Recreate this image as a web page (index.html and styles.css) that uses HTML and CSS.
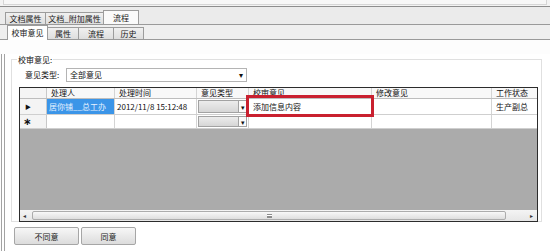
FILE: index.html
```html
<!DOCTYPE html>
<html lang="zh-CN">
<head>
    <meta charset="UTF-8">
    <title>流程 - 校审意见</title>
    <link rel="stylesheet" href="styles.css">
</head>
<body>
    <div class="top-strip"><div class="top-box"></div></div>

    <!-- outer tabs -->
    <div class="tab-row tab-row-outer">
        <div class="tab w40">文档属性</div>
        <div class="tab w58">文档_附加属性</div>
        <div class="tab tab-active w35">流程</div>
    </div>

    <!-- inner tabs -->
    <div class="tab-row tab-row-inner">
        <div class="tab tab-active w40">校审意见</div>
        <div class="tab w31">属性</div>
        <div class="tab w35">流程</div>
        <div class="tab w30">历史</div>
    </div>

    <div class="panel">
        <fieldset class="group">
            <legend>校审意见:</legend>

            <div class="filter">
                <span class="filter-label">意见类型:</span>
                <div class="combo">
                    <span>全部意见</span>
                    <span class="combo-arrow">▾</span>
                </div>
            </div>

            <div class="grid">
                <div class="grid-row grid-head">
                    <div class="cell rh"></div>
                    <div class="cell">处理人</div>
                    <div class="cell">处理时间</div>
                    <div class="cell">意见类型</div>
                    <div class="cell">校审意见</div>
                    <div class="cell">修改意见</div>
                    <div class="cell">工作状态</div>
                </div>
                <div class="grid-row row-1">
                    <div class="cell rh">▶</div>
                    <div class="cell selected">居你铺__总工办</div>
                    <div class="cell date">2012/11/8 15:12:48</div>
                    <div class="cell cell-combo"><span class="mini-box"></span><span class="mini-arrow">▾</span></div>
                    <div class="cell">添加信息内容</div>
                    <div class="cell"></div>
                    <div class="cell">生产副总</div>
                </div>
                <div class="grid-row row-2">
                    <div class="cell rh star">∗</div>
                    <div class="cell"></div>
                    <div class="cell"></div>
                    <div class="cell cell-combo"><span class="mini-box"></span><span class="mini-arrow">▾</span></div>
                    <div class="cell"></div>
                    <div class="cell"></div>
                    <div class="cell"></div>
                </div>
                <div class="grid-empty"></div>
                <div class="hscroll">
                    <span class="scroll-btn left">◂</span>
                    <span class="scroll-thumb"><span class="grip"></span></span>
                    <span class="scroll-btn right">▸</span>
                </div>

                <!-- highlight drawn over the grid -->
                <div class="highlight"></div>
            </div>
        </fieldset>

        <div class="actions">
            <button class="btn w65">不同意</button>
            <button class="btn w55">同意</button>
        </div>
    </div>
</body>
</html>
```

FILE: styles.css
```css
* {
    margin: 0;
    padding: 0;
    box-sizing: border-box;
}

html, body {
    overflow: hidden;
}

body {
    width: 550px;
    height: 251px;
    background: #fdfdfd;
    font-family: "Noto Sans CJK SC", "Liberation Sans", sans-serif;
    font-size: 8px;
    line-height: 10px;
    color: #111;
}

.top-strip {
    height: 7px;
    background: #f3f3f3;
    border-bottom: 1px solid #8d8d8d;
    padding: 0 3px;
}

.top-box {
    height: 5px;
    border: 1px solid #d6d6d6;
    border-top: none;
    background: #f7f7f7;
}

/* tabs */
.tab-row {
    display: flex;
    align-items: flex-end;
    border-bottom: 1px solid #9a9a9a;
}

.tab-row-outer {
    height: 18px;
    padding-left: 5px;
    background: #ebebeb;
}

.tab-row-inner {
    height: 15px;
    padding-left: 7px;
    background: #efefef;
}

.tab {
    height: 12px;
    border: 1px solid #9c9c9c;
    border-bottom: none;
    margin-right: -1px;
    background: linear-gradient(#f0f0f0, #dedede);
    display: flex;
    align-items: center;
    justify-content: center;
    color: #1a1a1a;
}

.tab-active {
    height: 14px;
    background: #fafafa;
    position: relative;
    z-index: 1;
}

.tab-row-inner .tab-active {
    height: 15px;
    margin-bottom: -1px;
    background: #fff;
}

.w30 { width: 31px; }
.w31 { width: 32px; }
.w35 { width: 36px; }
.w40 { width: 41px; }
.w58 { width: 59px; }

/* panel */
.panel {
    height: 209px;
    margin-left: 1px;
    border-left: 4px double #a3a3a3;
    background: #fff;
}

.group {
    width: 531px;
    height: 168px;
    margin: 14px 0 0 6px;
    border: 1px solid #e0e0e0;
    padding: 0 3px 0 7px;
}

.group legend {
    margin-left: -2px;
    padding: 0 1px;
    line-height: 11px;
}

.filter {
    display: flex;
    align-items: center;
    margin-top: 3px;
    height: 14px;
}

.filter-label {
    width: 47px;
    padding-left: 6px;
}

.combo {
    width: 181px;
    height: 14px;
    border: 1px solid #b4b4b4;
    background: #fff;
    display: flex;
    align-items: center;
    justify-content: space-between;
    padding: 0 3px;
}

.combo-arrow {
    font-size: 8px;
}

/* data grid */
.grid {
    position: relative;
    margin-top: 5px;
    width: 519px;
    border: 1px solid #2c2c2c;
    background: #ababab;
}

.grid-row {
    display: grid;
    grid-template-columns: 27px 68px 82px 52px 123px 120px 45px;
    background: #fff;
    border-bottom: 1px solid #cfcfcf;
}

.grid-head {
    height: 11px;
    background: #f8f8f8;
    border-bottom-color: #bdbdbd;
}

.row-1 { height: 16px; }
.row-2 { height: 14px; }

.cell {
    border-right: 1px solid #d4d4d4;
    padding-left: 4px;
    display: flex;
    align-items: center;
    white-space: nowrap;
    overflow: hidden;
}

.cell:last-child {
    border-right: none;
}

.rh {
    background: #f4f4f4;
    border-right-color: #c8c8c8;
    font-size: 6px;
    padding-left: 5px;
}

.star {
    font-family: "DejaVu Sans", sans-serif;
    font-size: 10px;
    font-weight: bold;
    padding-left: 3px;
}

.selected {
    background: #3b95e8;
    color: #e8f2ff;
    padding-left: 2px;
}

.date {
    font-size: 8px;
    padding-left: 2px;
}

.cell-combo {
    padding: 1px;
    align-items: stretch;
}

.mini-box {
    flex: 1;
    border: 1px solid #a2a2a2;
    border-right: none;
    background: linear-gradient(#ececec, #d6d6d6);
}

.mini-arrow {
    width: 9px;
    border: 1px solid #a2a2a2;
    background: #fbfbfb;
    font-size: 7px;
    display: flex;
    align-items: center;
    justify-content: center;
}

.grid-empty {
    height: 81px;
}

.hscroll {
    height: 11px;
    display: flex;
    background: linear-gradient(#f4f4f4, #e6e6e6);
}

.scroll-btn {
    display: flex;
    align-items: center;
    font-size: 6px;
    color: #333;
}

.scroll-btn.left {
    width: 12px;
    padding-left: 3px;
}

.scroll-btn.right {
    width: 31px;
    justify-content: flex-end;
    padding-right: 4px;
}

.scroll-thumb {
    flex: 1;
    margin: 1px 0;
    border: 1px solid #acacac;
    border-radius: 2px;
    background: linear-gradient(#f8f8f8, #dedede);
    display: flex;
    align-items: center;
    justify-content: center;
}

.grip {
    width: 5px;
    height: 4px;
    border-top: 1px solid #8c8c8c;
    border-bottom: 1px solid #8c8c8c;
    background: linear-gradient(#fff 0 1px, #8c8c8c 1px 2px, #fff 2px);
}

.highlight {
    position: absolute;
    left: 226px;
    top: 7px;
    width: 128px;
    height: 22px;
    border: 3px solid #c9202f;
}

/* buttons */
.actions {
    display: flex;
    gap: 2px;
    margin: 5px 0 0 9px;
}

.btn {
    height: 18px;
    border: 1px solid #a6a6a6;
    border-radius: 2px;
    background: linear-gradient(#f7f7f7, #dcdcdc);
    font-family: inherit;
    font-size: 8px;
    color: #222;
}

.w65 { width: 65px; }
.w55 { width: 55px; }
```
